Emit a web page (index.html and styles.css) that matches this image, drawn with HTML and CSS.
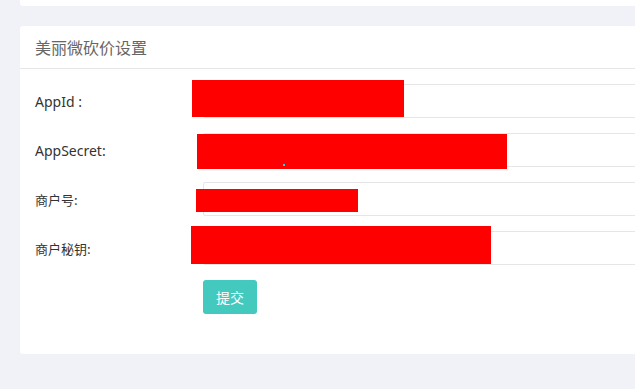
FILE: index.html
```html
<!DOCTYPE html>
<html lang="zh-CN">
<head>
    <meta charset="UTF-8">
    <meta name="viewport" content="width=device-width, initial-scale=1.0">
    <title>美丽微砍价设置</title>
    <link rel="stylesheet" href="styles.css">
</head>

<body>
    <div class="page">
        <!-- previous card, mostly scrolled off -->
        <div class="card card-top"></div>

        <!-- settings -->
        <div class="card">
            <div class="card-header">美丽微砍价设置</div>
            <div class="card-body">
                <div class="form-row">
                    <label class="form-label">AppId :</label>
                    <input class="form-input" type="text">
                    <span class="mask mask-1"></span>
                </div>
                <div class="form-row">
                    <label class="form-label">AppSecret:</label>
                    <input class="form-input" type="text">
                    <span class="mask mask-2"></span>
                    <span class="dot"></span>
                </div>
                <div class="form-row">
                    <label class="form-label cn">商户号:</label>
                    <input class="form-input" type="text">
                    <span class="mask mask-3"></span>
                </div>
                <div class="form-row">
                    <label class="form-label cn">商户秘钥:</label>
                    <input class="form-input" type="text">
                    <span class="mask mask-4"></span>
                </div>
                <div class="form-row">
                    <span class="form-label"></span>
                    <button class="button">提交</button>
                </div>
            </div>
        </div>
    </div>
</body>
</html>
```

FILE: styles.css
```css
body {
    margin: 0;
    padding: 0;
    background-color: #f0f2f7;
    font-family: 'Noto Sans', 'Noto Sans CJK SC', sans-serif;
    overflow: hidden;
}

.page {
    width: 700px;
    padding-left: 20px;
}

.card {
    background-color: white;
    border-radius: 3px;
    margin-bottom: 20px;
}

.card-top {
    height: 6px;
    border-radius: 0 0 3px 3px;
}

.card-header {
    height: 42px;
    line-height: 42px;
    padding: 0 15px;
    font-size: 16px;
    color: #666;
    border-bottom: 1px solid #e6e6e6;
    font-family: 'Noto Sans CJK SC', sans-serif;
}

.card-body {
    padding: 15px 15px 40px;
}

.form-row {
    position: relative;
    display: flex;
    align-items: center;
    height: 34px;
    margin-bottom: 15px;
}

.form-row:last-child {
    margin-bottom: 0;
}

.form-label {
    width: 168px;
    flex-shrink: 0;
    font-size: 14px;
    color: #333;
}

.form-label.cn {
    font-size: 13px;
    font-family: 'Noto Sans CJK SC', sans-serif;
}

.form-input {
    flex: 1;
    height: 34px;
    box-sizing: border-box;
    border: 1px solid #e6e6e6;
    border-radius: 2px;
    padding: 0 10px;
    background: white;
    outline: none;
}

.button {
    width: 54px;
    height: 34px;
    border: none;
    border-radius: 3px;
    background-color: #44c9bf;
    color: white;
    font-size: 14px;
    font-family: 'Noto Sans CJK SC', sans-serif;
    cursor: pointer;
}

/* redacted values */
.mask {
    position: absolute;
    background-color: #ff0000;
}

.mask-1 { left: 157px; top: -4px; width: 212px; height: 37px; }
.mask-2 { left: 162px; top: 1px; width: 310px; height: 35px; }
.mask-3 { left: 161px; top: 7px; width: 162px; height: 23px; }
.mask-4 { left: 156px; top: -5px; width: 300px; height: 38px; }

.dot {
    position: absolute;
    left: 248px;
    top: 31px;
    width: 2px;
    height: 2px;
    background-color: #2ad4e8;
}
```
